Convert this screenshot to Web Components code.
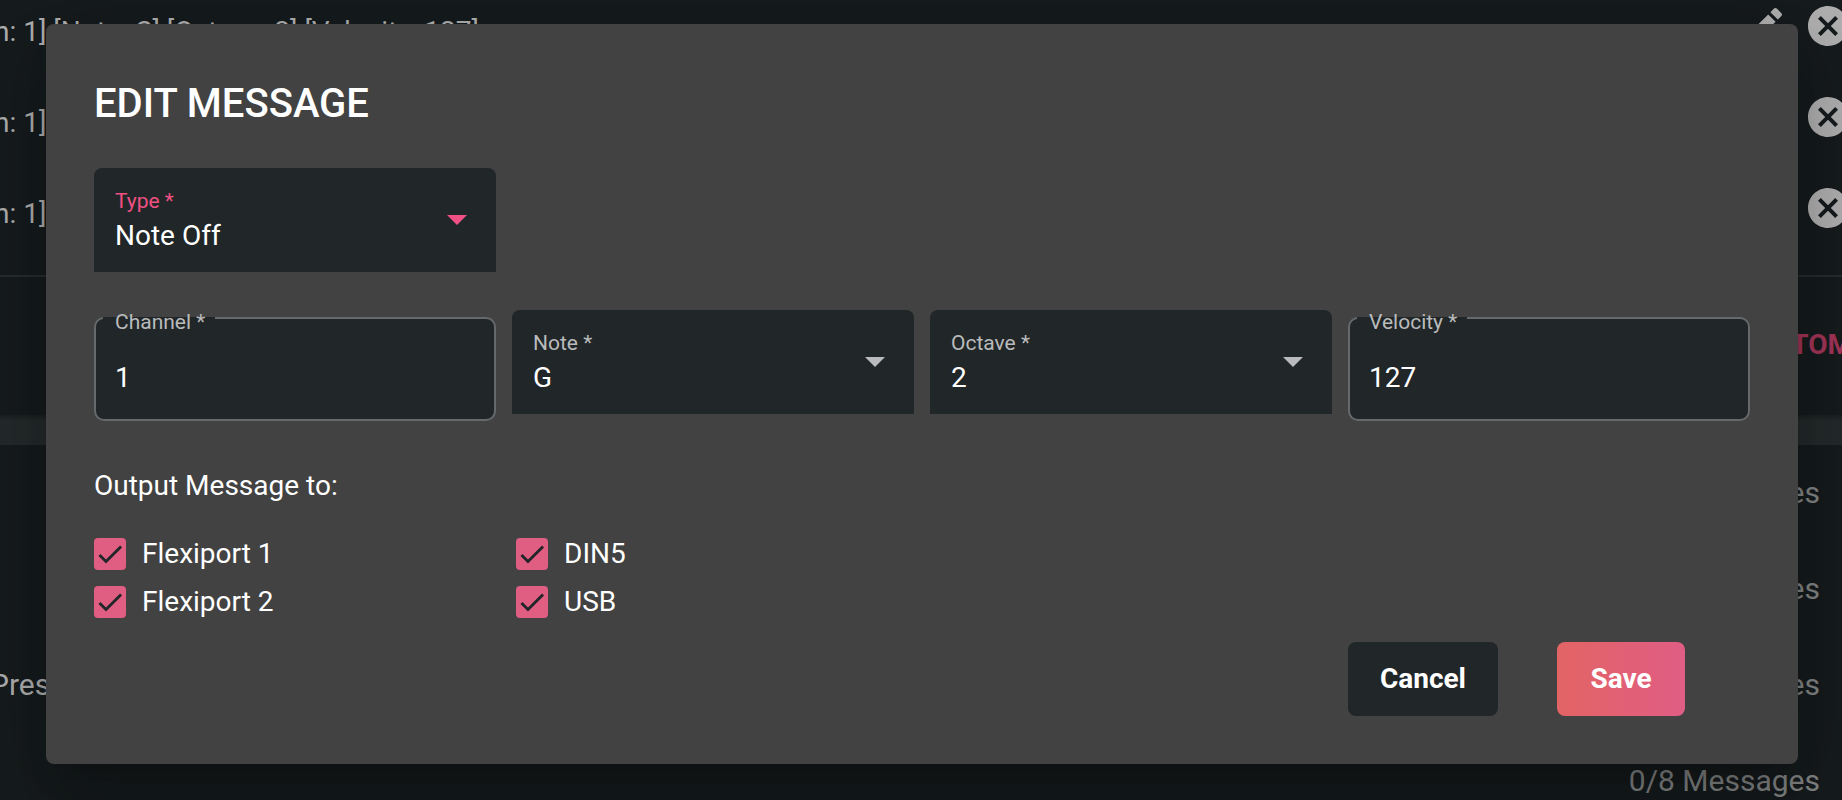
<!DOCTYPE html>
<html lang="en">
<head>
<meta charset="utf-8">
<title>Edit message</title>
<style>
  body {
    margin: 0;
    min-height: 100vh;
    overflow: hidden;
    background: #161b1d;
    color: #fff;
    font-family: Roboto, 'Liberation Sans', sans-serif;
    font-size: 28px;
    line-height: 32px;
  }
</style>
</head>
<body>
<message-list>
  <message-row slot="messages">n: 1] [Note: C] [Octave: 2] [Velocity: 127]</message-row>
  <message-row slot="messages">n: 1]</message-row>
  <message-row slot="messages">n: 1]</message-row>
  <a slot="action" href="#bottom">TOM</a>
  <preset-row slot="presets" count="es"></preset-row>
  <preset-row slot="presets" count="es"></preset-row>
  <preset-row slot="presets" count="es">Press</preset-row>
  <preset-row slot="presets" count="0/8 Messages"></preset-row>
</message-list>

<edit-dialog heading="EDIT MESSAGE">
  <select-field slot="type" label="Type *" value="Note Off" active></select-field>
  <text-field slot="values" label="Channel *" value="1"></text-field>
  <select-field slot="values" label="Note *" value="G"></select-field>
  <select-field slot="values" label="Octave *" value="2"></select-field>
  <text-field slot="values" label="Velocity *" value="127"></text-field>
  <check-field slot="outputs">Flexiport 1</check-field>
  <check-field slot="outputs">DIN5</check-field>
  <check-field slot="outputs">Flexiport 2</check-field>
  <check-field slot="outputs">USB</check-field>
  <action-button slot="actions">Cancel</action-button>
  <action-button slot="actions" primary>Save</action-button>
</edit-dialog>

<script>
class MessageList extends HTMLElement {
  constructor() {
    super();
    this.attachShadow({ mode: 'open' }).innerHTML = `
    <style>
      :host {
        display: block;
        margin: 0 -10px 0 -6px;
      }

      .messages {
        display: grid;
        grid-auto-rows: 91px;
        margin-top: -20px;
        padding-bottom: 22px;
        border-bottom: 2px solid #262c2e;
      }

      .action {
        display: flex;
        justify-content: flex-end;
        align-items: center;
        height: 138px;
        box-sizing: border-box;
        padding-bottom: 2px;
      }

      ::slotted(a) {
        color: #a33558;
        font-weight: 700;
        text-decoration: none;
      }

      .band {
        height: 30px;
        background: linear-gradient(#1b2021, #242a2b 6px);
      }

      .presets {
        display: grid;
        grid-auto-rows: 96px;
        font-size: 30px;
      }
    </style>
    <div class="messages"><slot name="messages"></slot></div>
    <div class="action"><slot name="action"></slot></div>
    <div class="band"></div>
    <div class="presets"><slot name="presets"></slot></div>
    `;
  }
}

class MessageRow extends HTMLElement {
  constructor() {
    super();
    this.attachShadow({ mode: 'open' }).innerHTML = `
    <style>
      :host {
        display: flex;
        align-items: center;
        color: #b0b0b0;
      }

      .text {
        flex: 1;
        padding-top: 12px;
      }

      button {
        display: flex;
        padding: 0;
        border: 0;
        background: none;
        color: inherit;
      }

      .edit {
        margin-right: 16px;
      }
    </style>
    <span class="text"><slot></slot></span>
    <button class="edit" aria-label="Edit">
      <svg width="48" height="48" viewBox="0 0 24 24" fill="currentColor"><path d="M3 17.3V21h3.7L17.8 9.9l-3.7-3.7zM20.7 7c.4-.4.4-1 0-1.4l-2.3-2.3c-.4-.4-1-.4-1.4 0l-1.8 1.8 3.7 3.7z"/></svg>
    </button>
    <button aria-label="Remove">
      <svg width="48" height="48" viewBox="0 0 24 24" fill="currentColor"><path d="M12 2C6.47 2 2 6.47 2 12s4.47 10 10 10 10-4.47 10-10S17.53 2 12 2zm5 13.59L15.59 17 12 13.41 8.41 17 7 15.59 10.59 12 7 8.41 8.41 7 12 10.59 15.59 7 17 8.41 13.41 12 17 15.59z"/></svg>
    </button>
    `;
  }
}

class PresetRow extends HTMLElement {
  constructor() {
    super();
    this.attachShadow({ mode: 'open' });
  }

  connectedCallback() {
    this.shadowRoot.innerHTML = `
    <style>
      :host {
        display: flex;
        justify-content: space-between;
        align-items: center;
        padding-right: 32px;
        color: #b0b0b0;
      }

      .name {
        margin-left: -4px;
      }

      .count {
        color: #848686;
      }
    </style>
    <span class="name"><slot></slot></span>
    <span class="count">${this.getAttribute('count')}</span>
    `;
  }
}

class EditDialog extends HTMLElement {
  constructor() {
    super();
    this.attachShadow({ mode: 'open' });
  }

  connectedCallback() {
    this.shadowRoot.innerHTML = `
    <style>
      /* the dialog floats over the list */
      :host {
        position: absolute;
        top: 24px;
        left: 46px;
        right: 44px;
      }

      section {
        padding: 48px;
        border-radius: 8px;
        background: #424242;
        box-shadow: 0 22px 30px -14px rgba(0, 0, 0, .2),
          0 48px 76px 6px rgba(0, 0, 0, .14),
          0 18px 92px 16px rgba(0, 0, 0, .12);
      }

      h1 {
        margin: 0 0 32px;
        font-size: 40px;
        font-weight: 500;
        line-height: 64px;
      }

      .row {
        display: grid;
        grid-template-columns: repeat(4, 1fr);
        gap: 16px;
        margin-bottom: 38px;
      }

      fieldset {
        min-width: 0;
        margin: 0;
        padding: 11px 0 0;
        border: 0;
      }

      .title {
        margin: 0 0 36px;
      }

      .outputs {
        display: grid;
        grid-template-columns: 406px auto;
        justify-content: start;
        gap: 16px;
      }

      .actions {
        display: flex;
        justify-content: flex-end;
        gap: 59px;
        padding: 24px 65px 0 0;
      }
    </style>
    <section role="dialog" aria-labelledby="heading">
      <h1 id="heading">${this.getAttribute('heading')}</h1>
      <div class="row"><slot name="type"></slot></div>
      <div class="row"><slot name="values"></slot></div>
      <fieldset aria-labelledby="outputs">
        <p class="title" id="outputs">Output Message to:</p>
        <div class="outputs"><slot name="outputs"></slot></div>
      </fieldset>
      <div class="actions"><slot name="actions"></slot></div>
    </section>
    `;
  }
}

class SelectField extends HTMLElement {
  constructor() {
    super();
    this.attachShadow({ mode: 'open' });
  }

  connectedCallback() {
    const value = this.getAttribute('value');
    this.shadowRoot.innerHTML = `
    <style>
      :host {
        --accent: #b9bbbc;
        display: block;
      }

      :host([active]) {
        --accent: #f05083;
      }

      .field {
        display: grid;
        grid-template: 24px 46px / 1fr;
        height: 104px;
        box-sizing: border-box;
        padding-top: 21px;
        border-radius: 8px 8px 0 0;
        background: #212628;
      }

      label {
        grid-area: 1 / 1;
        padding-left: 21px;
        color: var(--accent);
        font-size: 21px;
        line-height: 24px;
      }

      select {
        appearance: none;
        grid-area: 2 / 1;
        border: 0;
        padding: 0 21px;
        background: none;
        color: inherit;
        font: inherit;
      }

      svg {
        grid-area: 1 / 1 / 3 / 2;
        place-self: start end;
        margin: 26px 29px 0 0;
        fill: var(--accent);
        pointer-events: none;
      }
    </style>
    <div class="field">
      <label for="value">${this.getAttribute('label')}</label>
      <select id="value"><option>${value}</option></select>
      <svg width="20" height="10" viewBox="0 0 20 10"><path d="M0 0h20L10 10z"/></svg>
    </div>
    `;
  }
}

class TextField extends HTMLElement {
  constructor() {
    super();
    this.attachShadow({ mode: 'open' });
  }

  connectedCallback() {
    this.shadowRoot.innerHTML = `
    <style>
      :host {
        display: block;
        padding-top: 7px;
      }

      .field {
        position: relative;
        box-sizing: border-box;
        height: 104px;
        border: 2px solid #65696b;
        border-radius: 10px;
        background: #212628;
      }

      /* the label sits in a notch of the outline */
      label {
        position: absolute;
        top: -9px;
        left: 7px;
        padding: 0 10px 0 12px;
        background: linear-gradient(transparent 7px, #212628 7px);
        color: #b9bbbc;
        font-size: 21px;
        line-height: 24px;
      }

      input {
        width: 100%;
        height: 100%;
        box-sizing: border-box;
        padding: 16px 19px 0;
        border: 0;
        background: none;
        color: inherit;
        font: inherit;
      }
    </style>
    <div class="field">
      <label for="value">${this.getAttribute('label')}</label>
      <input id="value" value="${this.getAttribute('value')}">
    </div>
    `;
  }
}

class CheckField extends HTMLElement {
  constructor() {
    super();
    this.attachShadow({ mode: 'open' }).innerHTML = `
    <style>
      :host {
        display: block;
      }

      label {
        display: flex;
        align-items: center;
        gap: 16px;
      }

      .box {
        display: grid;
      }

      input,
      svg {
        grid-area: 1 / 1;
        width: 32px;
        height: 32px;
        margin: 0;
      }

      input {
        appearance: none;
        border-radius: 4px;
        background: #e15e83;
      }

      svg {
        visibility: hidden;
        pointer-events: none;
      }

      input:checked + svg {
        visibility: visible;
      }
    </style>
    <label>
      <span class="box">
        <input type="checkbox" checked>
        <svg viewBox="0 0 24 24" fill="none" stroke="#212628" stroke-width="2.1"><path d="M4.1 12.7 9 17.6 20.3 6.3"/></svg>
      </span>
      <slot></slot>
    </label>
    `;
  }
}

class ActionButton extends HTMLElement {
  constructor() {
    super();
    this.attachShadow({ mode: 'open' }).innerHTML = `
    <style>
      :host {
        display: block;
      }

      button {
        min-width: 128px;
        padding: 21px 32px;
        border: 0;
        border-radius: 8px;
        background: #212628;
        color: inherit;
        font: inherit;
        font-weight: 700;
      }

      :host([primary]) button {
        background: linear-gradient(90deg, #e36464, #e05d84);
      }
    </style>
    <button type="button"><slot></slot></button>
    `;
  }
}

customElements.define('message-list', MessageList);
customElements.define('message-row', MessageRow);
customElements.define('preset-row', PresetRow);
customElements.define('edit-dialog', EditDialog);
customElements.define('select-field', SelectField);
customElements.define('text-field', TextField);
customElements.define('check-field', CheckField);
customElements.define('action-button', ActionButton);
</script>
</body>
</html>
